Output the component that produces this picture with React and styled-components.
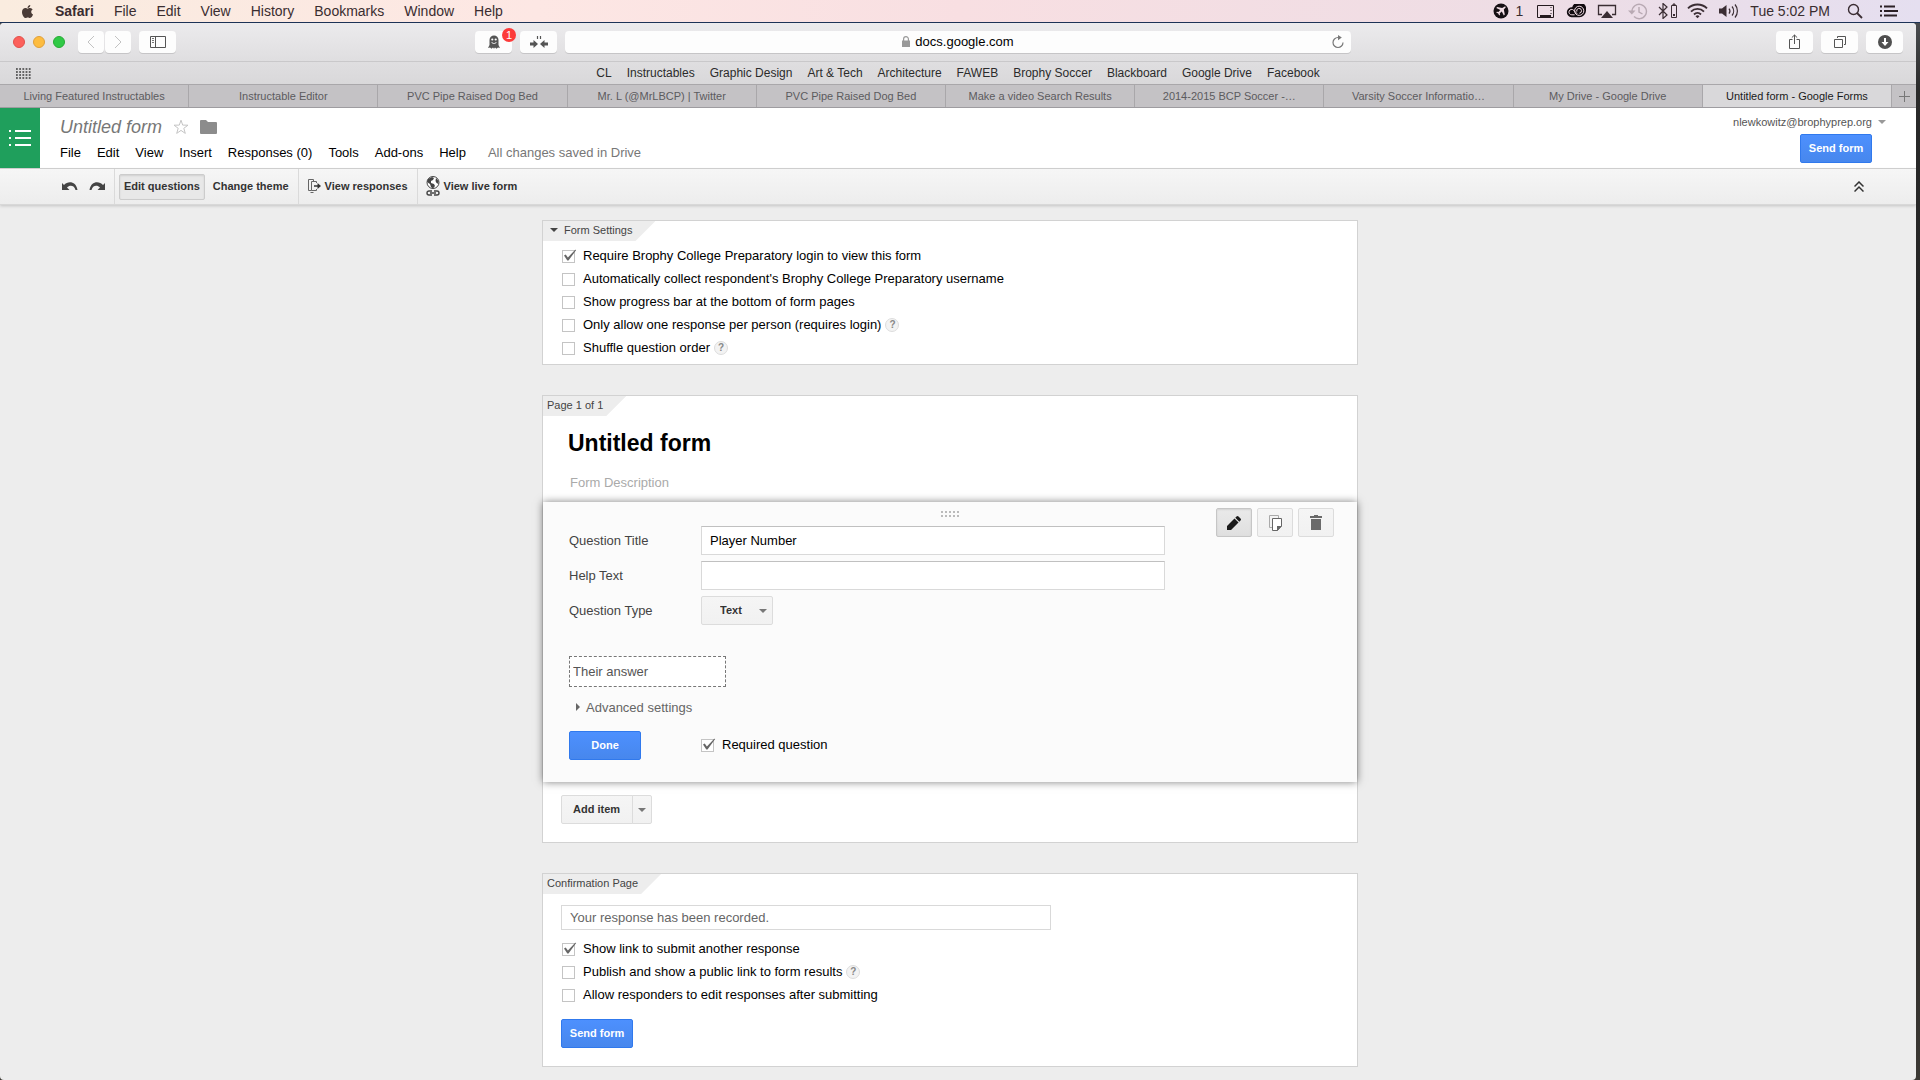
import React, { useState } from "react";
import styled, { createGlobalStyle, css } from "styled-components";
import { FaApple } from "react-icons/fa";

const GlobalStyle = createGlobalStyle`
  * {
    box-sizing: border-box;
  }

  body {
    margin: 0;
    background: #222;
    font-family: "Liberation Sans", Arial, Helvetica, sans-serif;
    font-size: 13px;
    color: #000;
  }

  button,
  input,
  select {
    font-family: inherit;
    margin: 0;
  }

  svg {
    display: block;
    flex: none;
  }
`;

const Desktop = styled.div`
  min-height: 100vh;
  display: flex;
  flex-direction: column;
  background: linear-gradient(#55585c, #2a2a2a 90px, #1c1c1c 60%, #3c3934);
`;

/* macOS menu bar */
const MenuBar = styled.header`
  height: 23px;
  padding: 0 22px 0 20px;
  display: flex;
  align-items: center;
  justify-content: space-between;
  border-bottom: 1px solid #1d3357;
  background: linear-gradient(
    90deg,
    #faecdf,
    #fde7e4 28%,
    #f8dfe2 50%,
    #eedde5 80%,
    #e5dff0
  );
  color: #3a2d30;
  font-size: 14px;
`;

const SystemMenus = styled.nav`
  display: flex;
  align-items: center;
  gap: 20px;
`;

const SystemMenu = styled.button`
  padding: 0;
  border: none;
  background: none;
  color: inherit;
  font-size: 14px;
  font-weight: ${(props) => (props.$bold ? "bold" : "normal")};
`;

const StatusItems = styled.div`
  display: flex;
  align-items: center;
  gap: 10px;
`;

const StatusGroup = styled.div`
  display: flex;
  align-items: center;
  gap: ${(props) => props.$gap}px;
`;

/* Safari window */
const BrowserWindow = styled.div`
  flex: 1;
  margin-right: 4px;
  display: flex;
  flex-direction: column;
  border-radius: 4px;
  overflow: hidden;
  background: #ededed;
`;

const BrowserToolbar = styled.div`
  height: 39px;
  display: grid;
  grid-template-columns: 475fr 876fr 565fr;
  align-items: center;
  padding-bottom: 1px;
  border-bottom: 1px solid #c9c8ca;
  background: linear-gradient(#ecebed, #dfdee0);
`;

const ToolbarSide = styled.div`
  display: flex;
  align-items: center;
  gap: 8px;
  padding-left: 13px;

  ${(props) =>
    props.$right &&
    css`
      justify-content: flex-end;
      padding: 0 13px 0 0;
    `}
`;

const ToolbarCenter = styled.div`
  display: flex;
  gap: 8px;
`;

const TrafficLights = styled.div`
  display: flex;
  gap: 8px;
  margin-right: 5px;
`;

const Light = styled.button`
  width: 12px;
  height: 12px;
  padding: 0;
  border: 1px solid ${(props) => props.$edge};
  border-radius: 50%;
  background: ${(props) => props.$color};
`;

const ButtonPair = styled.div`
  display: flex;
  gap: 1px;
`;

const ChromeButton = styled.button`
  position: relative;
  width: ${(props) => props.$width || 37}px;
  height: 22px;
  padding: 0;
  display: flex;
  align-items: center;
  justify-content: center;
  border: none;
  border-radius: 4px;
  background: #fdfdfd;
  box-shadow: 0 1px 0 #c6c5c7;
`;

const Badge = styled.span`
  position: absolute;
  top: -3px;
  right: -4px;
  width: 14px;
  height: 14px;
  border-radius: 50%;
  background: #fc3b3a;
  color: #fff;
  font-size: 11px;
  line-height: 14px;
  text-align: center;
`;

const RightButtons = styled.div`
  display: flex;
  gap: 8px;
`;

const AddressBar = styled.div`
  flex: 1;
  height: 22px;
  padding: 0 7px 0 19px;
  display: flex;
  align-items: center;
  border-radius: 4px;
  background: #fdfdfd;
  box-shadow: 0 1px 0 #c6c5c7;
`;

const Address = styled.div`
  flex: 1;
  display: flex;
  align-items: center;
  justify-content: center;
  gap: 5px;
`;

const IconButton = styled.button`
  padding: 0;
  border: none;
  background: none;
`;

const BookmarksBar = styled.nav`
  height: 22px;
  padding: 0 31px 0 16px;
  display: flex;
  align-items: center;
  background: linear-gradient(#dfdee0, #d9d8da);
`;

const Bookmarks = styled.div`
  flex: 1;
  display: flex;
  justify-content: center;
  gap: 15px;
`;

const Bookmark = styled.a`
  color: #2b2b2b;
  font-size: 12px;
  text-decoration: none;
`;

const TabStrip = styled.div`
  height: 24px;
  display: flex;
  border-top: 1px solid #a9a7aa;
  border-bottom: 1px solid #9e9ca0;
  background: #c4c2c5;
`;

const BrowserTab = styled.button`
  flex: 1;
  min-width: 0;
  padding: 0 16px;
  overflow: hidden;
  text-overflow: ellipsis;
  white-space: nowrap;
  border: none;
  border-right: 1px solid #a9a7aa;
  background: ${(props) => (props.$active ? "#d9d8da" : "transparent")};
  color: ${(props) => (props.$active ? "#1a1a1a" : "#5c5b5e")};
  font-size: 11px;
`;

const NewTab = styled.button`
  width: 24px;
  padding: 0;
  display: flex;
  align-items: center;
  justify-content: center;
  border: none;
  background: none;
`;

/* Forms header */
const FormsHeader = styled.header`
  height: 61px;
  display: flex;
  border-bottom: 1px solid #d4d4d4;
  background: #fff;
`;

const HomeLink = styled.a`
  width: 40px;
  height: 60px;
  display: flex;
  align-items: center;
  justify-content: center;
  background: #1f9f5c;
`;

const HeaderMain = styled.div`
  flex: 1;
  padding: 8px 0 0 20px;
  display: flex;
  flex-direction: column;
  gap: 7px;
`;

const TitleRow = styled.div`
  height: 22px;
  display: flex;
  align-items: center;
  gap: 11px;
`;

const DocTitle = styled.span`
  font-size: 18px;
  font-style: italic;
  color: #777;
`;

const MenuRow = styled.nav`
  height: 16px;
  display: flex;
  align-items: center;
  gap: 16px;
`;

const DocMenu = styled.button`
  padding: 0;
  border: none;
  background: none;
  font-size: 13px;
  line-height: 16px;
  color: #000;
`;

const SaveStatus = styled.span`
  margin-left: 6px;
  line-height: 16px;
  color: #777;
`;

const HeaderAside = styled.div`
  padding: 7px 30px 0 0;
  display: flex;
  flex-direction: column;
  align-items: flex-end;
  gap: 5px;
`;

const Account = styled.button`
  height: 14px;
  padding: 0;
  display: flex;
  align-items: center;
  gap: 6px;
  border: none;
  background: none;
  color: #555;
  font-size: 11px;
`;

const HeaderAction = styled.div`
  margin-right: 14px;
`;

const PrimaryButton = styled.button`
  width: 72px;
  height: 29px;
  padding: 0 0 2px;
  border: 1px solid #3079ed;
  border-radius: 2px;
  background: linear-gradient(#4d90fe, #4787ed);
  color: #fff;
  font-size: 11px;
  font-weight: bold;
`;

/* Forms toolbar */
const FormsToolbar = styled.div`
  height: 36px;
  padding: 0 52px 0 62px;
  display: flex;
  align-items: center;
  border-bottom: 1px solid #d8d8d8;
  background: linear-gradient(#f6f6f6, #ededed);
  box-shadow: 0 1px 3px rgba(0, 0, 0, 0.18);
`;

const ToolGroup = styled.div`
  height: 35px;
  padding: 0 4px;
  display: flex;
  align-items: center;
  gap: 3px;
  border-right: 1px solid #dadada;
`;

const HistoryGroup = styled(ToolGroup)`
  padding: 0 9px 0 0;
  gap: 11px;
`;

const LastGroup = styled(ToolGroup)`
  flex: 1;
  padding: 0 3px;
  border-right: none;
`;

const ToolButton = styled.button`
  height: 26px;
  padding: 0 4px 2px;
  display: flex;
  align-items: center;
  gap: 4px;
  border: 1px solid ${(props) => (props.$active ? "#ccc" : "transparent")};
  border-radius: 2px;
  background: ${(props) => (props.$active ? "#e8e8e8" : "transparent")};
  box-shadow: ${(props) =>
    props.$active ? "inset 0 1px 2px rgba(0, 0, 0, 0.1)" : "none"};
  color: #333;
  font-size: 11px;
  font-weight: bold;
`;

/* Page content */
const Page = styled.main`
  flex: 1;
  padding: 15px 16px 13px 0;
  display: flex;
  flex-direction: column;
  align-items: center;
  gap: 30px;
`;

const Panel = styled.section`
  width: 100%;
  max-width: 816px;
  border: 1px solid #d2d2d2;
  background: #fff;
  padding-bottom: ${(props) => props.$bottom}px;
`;

const Ribbon = styled.div`
  width: max-content;
  height: 20px;
  padding: 0 23px 2px 4px;
  display: flex;
  align-items: center;
  gap: 6px;
  clip-path: polygon(0 0, 100% 0, calc(100% - 20px) 100%, 0 100%);
  background: #ededed;
  color: #444;
  font-size: 11px;
`;

const RibbonToggle = styled(Ribbon).attrs({ as: "button" })`
  padding-left: 7px;
  border: none;
`;

const Options = styled.div`
  padding: 4px 0 0 19px;
`;

const OptionRow = styled.div`
  height: 23px;
  display: flex;
  align-items: center;
`;

const OptionLabel = styled.label`
  display: flex;
  align-items: center;
  gap: 8px;
`;

const OptionText = styled.span`
  padding-bottom: 2px;
`;

const CheckSlot = styled.span`
  width: 13px;
  height: 13px;
  display: grid;

  > * {
    grid-area: 1 / 1;
  }

  > input:not(:checked) + svg {
    display: none;
  }
`;

const CheckBox = styled.input`
  appearance: none;
  width: 13px;
  height: 13px;
  border: 1px solid #c4c4c4;
  background: #fff;
`;

const HelpMark = styled.button`
  width: 14px;
  height: 14px;
  margin: 0 0 2px 4px;
  padding: 0;
  border: 1px solid #ddd;
  border-radius: 50%;
  background: #f3f3f3;
  color: #888;
  font-size: 10px;
  font-weight: bold;
  line-height: 12px;
`;

const FormTitle = styled.h1`
  margin: 13px 0 0;
  padding-left: 25px;
  font-size: 23px;
  line-height: 28px;
`;

const FormDescription = styled.input`
  display: block;
  width: 100%;
  height: 16px;
  margin: 17px 0 12px;
  padding: 0 27px;
  border: none;
  outline: none;
  font-size: 13px;

  &::placeholder {
    color: #aaa;
    opacity: 1;
  }
`;

const QuestionCard = styled.div`
  position: relative;
  padding: 0 23px 22px 26px;
  display: grid;
  grid-template-columns: 1fr auto;
  grid-template-rows: 24px auto;
  background: #fbfbfb;
  box-shadow: 0 0 8px rgba(0, 0, 0, 0.5);
`;

const DragHandle = styled.div`
  grid-area: 1 / 1 / 2 / 3;
  display: flex;
  justify-content: center;
  padding: 9px 3px 0 0;
`;

const QuestionActions = styled.div`
  grid-area: 1 / 2 / 3 / 3;
  align-self: start;
  display: flex;
  gap: 5px;
  margin-top: 6px;
`;

const GrayButton = styled.button`
  height: 29px;
  padding: 0 12px 2px 11px;
  display: flex;
  align-items: center;
  justify-content: center;
  border: 1px solid #dcdcdc;
  border-radius: 2px;
  background: linear-gradient(#f5f5f5, #f1f1f1);
  color: #333;
  font-size: 11px;
  font-weight: bold;
`;

const ActionButton = styled(GrayButton)`
  width: 36px;
  padding: 0;

  ${(props) =>
    props.$active &&
    css`
      border-color: #c6c6c6;
      background: linear-gradient(#eaeaea, #dfdfdf);
      box-shadow: inset 0 1px 2px rgba(0, 0, 0, 0.1);
    `}
`;

const QuestionBody = styled.div`
  grid-area: 2 / 1;
`;

const Fields = styled.div`
  display: flex;
  flex-direction: column;
  gap: 6px;
`;

const Field = styled.div`
  display: flex;
  align-items: center;
`;

const FieldLabel = styled.label`
  width: 132px;
  color: #444;
`;

const TextInput = styled.input`
  width: 464px;
  height: 29px;
  padding: 0 8px;
  border: 1px solid #d9d9d9;
  border-top-color: #c0c0c0;
  background: #fff;
  font-size: 13px;
`;

const SelectWrap = styled.div`
  display: grid;
  align-items: center;

  > * {
    grid-area: 1 / 1;
  }

  > svg {
    justify-self: end;
    margin-right: 6px;
    pointer-events: none;
  }
`;

const TypeSelect = styled.select`
  appearance: none;
  width: 72px;
  height: 29px;
  padding: 0 18px 2px;
  border: 1px solid #dcdcdc;
  border-radius: 2px;
  background: linear-gradient(#f5f5f5, #f1f1f1);
  color: #333;
  font-size: 11px;
  font-weight: bold;
`;

const AnswerPreview = styled.input`
  display: block;
  width: 157px;
  height: 31px;
  margin-top: 31px;
  padding: 0 3px;
  border: 1px dashed #777;
  background: #fff;
  color: #555;
  font-size: 13px;
`;

const AdvancedToggle = styled.button`
  height: 16px;
  margin: 12px 0 16px;
  padding: 0 7px;
  display: flex;
  align-items: center;
  gap: 6px;
  border: none;
  background: none;
  color: #666;
  font-size: 13px;
`;

const QuestionFooter = styled.div`
  display: flex;
  align-items: center;
  gap: 60px;
`;

const AddItem = styled.div`
  display: flex;
  margin: 13px 0 0 18px;

  > :first-child {
    border-radius: 2px 0 0 2px;
  }

  > :last-child {
    margin-left: -1px;
    padding: 0 5px;
    border-radius: 0 2px 2px 0;
  }
`;

const ConfirmationBody = styled.div`
  padding: 11px 18px 0;
`;

const ConfirmationInput = styled(TextInput)`
  display: block;
  width: 490px;
  height: 25px;
  border-color: #d9d9d9;
  color: #666;
`;

const ConfirmationOptions = styled.div`
  padding: 8px 0 12px 1px;
`;

const Arrow = ({ color = "#777", side = false }) =>
  side ? (
    <svg width="4" height="8" viewBox="0 0 4 8">
      <path d="M0 0l4 4-4 4z" fill={color} />
    </svg>
  ) : (
    <svg width="8" height="4" viewBox="0 0 8 4">
      <path d="M0 0h8L4 4z" fill={color} />
    </svg>
  );

const Tick = () => (
  <svg width="15" height="13" viewBox="0 0 15 13" overflow="visible">
    <path
      d="M2 5.6l1.7-1.2 2.2 3L13.2-.2l1 .2L6.5 10.6H5.3z"
      fill="#666"
    />
  </svg>
);

const Option = ({ id, text, checked = false, help = false }) => {
  const [isChecked, setIsChecked] = useState(checked);

  return (
    <OptionRow>
      <OptionLabel htmlFor={id}>
        <CheckSlot>
          <CheckBox
            id={id}
            type="checkbox"
            checked={isChecked}
            onChange={() => setIsChecked(!isChecked)}
          />
          <Tick />
        </CheckSlot>
        <OptionText>{text}</OptionText>
      </OptionLabel>
      {help && <HelpMark>?</HelpMark>}
    </OptionRow>
  );
};

const systemMenus = [
  "File",
  "Edit",
  "View",
  "History",
  "Bookmarks",
  "Window",
  "Help",
];

const bookmarks = [
  "CL",
  "Instructables",
  "Graphic Design",
  "Art & Tech",
  "Architecture",
  "FAWEB",
  "Brophy Soccer",
  "Blackboard",
  "Google Drive",
  "Facebook",
];

const tabs = [
  "Living Featured Instructables",
  "Instructable Editor",
  "PVC Pipe Raised Dog Bed",
  "Mr. L (@MrLBCP) | Twitter",
  "PVC Pipe Raised Dog Bed",
  "Make a video Search Results",
  "2014-2015 BCP Soccer -…",
  "Varsity Soccer Informatio…",
  "My Drive - Google Drive",
  "Untitled form - Google Forms",
];

const docMenus = [
  "File",
  "Edit",
  "View",
  "Insert",
  "Responses (0)",
  "Tools",
  "Add-ons",
  "Help",
];

const StatusBar = () => (
  <StatusItems>
    <StatusGroup $gap={7}>
      <svg width="16" height="16" viewBox="0 0 16 16">
        <circle cx="8" cy="8" r="7.5" fill="#161014" />
        <path
          d="M11.8 3.4c.8 0 1 .5.8 1.2L10.8 6.5l1 5-1 .9-2-4-2 1.9.2 1.5-.8.7-1-2-2-1 .7-.8 1.5.2 1.9-2-4-2 .9-1 5 1z"
          fill="#f1dde4"
        />
      </svg>
      <span>1</span>
    </StatusGroup>
    <StatusGroup $gap={11}>
      <svg width="22" height="16" viewBox="0 0 22 16">
        <path d="M4.5 2.5h16v12h-16z" fill="none" stroke="#241a1e" />
        <path d="M7 12h11v3H7z" fill="#241a1e" />
        <path d="M18 4v7" stroke="#241a1e" strokeDasharray="1 2" />
      </svg>
      <svg width="20" height="14" viewBox="0 0 20 14">
        <path
          d="M6.2 3.2A7 6.8 0 0 1 20 6.8a6.6 6.6 0 0 1-6.6 6.4H5.5A5 5 0 0 1 6.2 3.2z"
          fill="#120c10"
        />
        <circle cx="13.2" cy="6.8" r="4.6" fill="none" stroke="#f1dde4" />
        <path
          d="M8.6 10.8H5.8a2.7 2.7 0 1 1 1.8-4.6l3.6 3.6"
          fill="none"
          stroke="#f1dde4"
        />
        <path
          d="M10.8 7.6a2.4 2.4 0 1 1 2.6 1.6"
          fill="none"
          stroke="#f1dde4"
        />
      </svg>
      <svg width="20" height="16" viewBox="0 0 20 16">
        <path
          d="M5 11.5H1.5v-9h17v9H15"
          fill="none"
          stroke="#3a2d33"
          strokeWidth="1.3"
        />
        <path d="M10 8l6 7H4z" fill="#3a2d33" />
      </svg>
      <svg width="20" height="17" viewBox="0 0 20 17" opacity="0.35">
        <path
          d="M4 8.5a7.2 7.2 0 1 1 2 5"
          fill="none"
          stroke="#5a4a52"
          strokeWidth="1.4"
        />
        <path d="M0 7.5h7.5L3.8 11.5z" fill="#5a4a52" />
        <path
          d="M11 4v5l3.5 2"
          fill="none"
          stroke="#5a4a52"
          strokeWidth="1.4"
        />
      </svg>
    </StatusGroup>
    <StatusGroup $gap={10}>
      <svg width="19" height="16" viewBox="0 0 19 16">
        <path
          d="M1 4l8 8-4 3.5V.5L9 4l-8 8"
          fill="none"
          stroke="#3a2d33"
          strokeWidth="1.2"
        />
        <path
          d="M13.5 2.5h5v12h-5zM15 1h2v1h-2z"
          fill="none"
          stroke="#3a2d33"
        />
        <path d="M15 11h2v2h-2z" fill="#3a2d33" />
      </svg>
      <svg width="21" height="16" viewBox="0 0 21 16">
        <g fill="none" stroke="#3a2d33" strokeWidth="1.9">
          <path d="M1 5.4a13.5 13.5 0 0 1 19 0" />
          <path d="M4 8.6a9.2 9.2 0 0 1 13 0" />
          <path d="M7 11.5a5 5 0 0 1 7 0" />
        </g>
        <path d="M8.5 13.2a3 3 0 0 1 4 0l-2 2z" fill="#3a2d33" />
      </svg>
      <svg width="22" height="16" viewBox="0 0 22 16">
        <path d="M1 5.5h3L8.5 2v12L4 10.5H1z" fill="#3a2d33" />
        <g fill="none" stroke="#3a2d33" strokeWidth="1.2">
          <path d="M11 5.5a4 4 0 0 1 0 5" />
          <path d="M14 3.5a7 7 0 0 1 0 9" />
          <path d="M17 1.5a10 10 0 0 1 0 13" />
        </g>
      </svg>
    </StatusGroup>
    <StatusGroup $gap={17}>
      <span>Tue 5:02 PM</span>
      <svg width="16" height="16" viewBox="0 0 16 16">
        <circle
          cx="6.5"
          cy="6.5"
          r="5"
          fill="none"
          stroke="#3a2d33"
          strokeWidth="1.4"
        />
        <path d="M10 10l5 5" stroke="#3a2d33" strokeWidth="1.8" />
      </svg>
      <svg width="18" height="12" viewBox="0 0 18 12">
        <path
          d="M0 1.5h2M4 1.5h11M0 6h2M4 6h14M0 10.5h2M4 10.5h13"
          stroke="#2b2026"
          strokeWidth="2"
        />
      </svg>
    </StatusGroup>
  </StatusItems>
);

const SafariChrome = () => (
  <>
    <BrowserToolbar>
      <ToolbarSide>
        <TrafficLights>
          <Light aria-label="Close" $color="#fc605b" $edge="#e2504b" />
          <Light aria-label="Minimize" $color="#fdbc40" $edge="#e0a03a" />
          <Light aria-label="Zoom" $color="#30c946" $edge="#27ab35" />
        </TrafficLights>
        <ButtonPair>
          <ChromeButton aria-label="Back" $width={26}>
            <svg width="8" height="14" viewBox="0 0 8 14">
              <path d="M7 1L1 7l6 6" fill="none" stroke="#c2c2c2" />
            </svg>
          </ChromeButton>
          <ChromeButton aria-label="Forward" $width={26}>
            <svg width="8" height="14" viewBox="0 0 8 14">
              <path d="M1 1l6 6-6 6" fill="none" stroke="#c2c2c2" />
            </svg>
          </ChromeButton>
        </ButtonPair>
        <ChromeButton aria-label="Sidebar">
          <svg width="16" height="12" viewBox="0 0 16 12">
            <path d="M.5.5h15v11H.5zM5.5.5v11" fill="none" stroke="#555" />
            <path d="M2 2.5h2M2 4.5h2M2 6.5h2" stroke="#777" />
          </svg>
        </ChromeButton>
      </ToolbarSide>
      <ToolbarCenter>
        <ChromeButton aria-label="Ghostery">
          <svg width="12" height="14" viewBox="0 0 12 14">
            <path
              d="M1.5 5a4.5 4.5 0 0 1 9 0v5l1.5 3-2-.5-1.5 1.3L7 12.5 6 13.8l-1-1.3-1.5 1.3L2 12.5 0 13l1.5-3z"
              fill="#555"
            />
            <circle cx="4.3" cy="4.5" r="1.1" fill="#fff" />
            <circle cx="7.7" cy="4.5" r="1.1" fill="#fff" />
            <path
              d="M3.5 7c1.2 2 3.8 2 5 0"
              fill="none"
              stroke="#fff"
              strokeWidth="0.9"
            />
          </svg>
          <Badge>1</Badge>
        </ChromeButton>
        <ChromeButton aria-label="Save">
          <svg width="18" height="12" viewBox="0 0 18 12">
            <path
              d="M0 6.5h3.500V4L8 8l-4.500 4V9.500H0zM18 6.500h-3.500V4L10 8l4.500 4V9.500H18z"
              fill="#555"
            />
            <path d="M7.5 0v3M10.5 0v3" stroke="#555" strokeWidth="1.2" />
          </svg>
        </ChromeButton>
        <AddressBar>
          <Address>
            <svg width="8" height="11" viewBox="0 0 8 11">
              <path d="M0 4.5h8V11H0z" fill="#999" />
              <path
                d="M1.6 5V3a2.4 2.4 0 0 1 4.8 0v2"
                fill="none"
                stroke="#999"
                strokeWidth="1.2"
              />
            </svg>
            <span>docs.google.com</span>
          </Address>
          <IconButton aria-label="Reload">
            <svg width="12" height="14" viewBox="0 0 12 14">
              <path
                d="M6.5 2.5H6A5 5 0 1 0 11 7.5"
                fill="none"
                stroke="#777"
                strokeWidth="1.2"
              />
              <path d="M6 0l3.8 2.6L6 5.3z" fill="#777" />
            </svg>
          </IconButton>
        </AddressBar>
      </ToolbarCenter>
      <ToolbarSide $right>
        <RightButtons>
          <ChromeButton aria-label="Share">
            <svg width="11" height="16" viewBox="0 0 11 16">
              <path
                d="M3.5 5.5h-3v9h10v-9h-3M5.5 10V1M2.8 3.6L5.5 1l2.7 2.6"
                fill="none"
                stroke="#555"
              />
            </svg>
          </ChromeButton>
          <ChromeButton aria-label="Show tabs">
            <svg width="12" height="12" viewBox="0 0 12 12">
              <path
                d="M.5 3.5h8v8h-8zM3.5 2V.5h8v8H10"
                fill="none"
                stroke="#555"
              />
            </svg>
          </ChromeButton>
          <ChromeButton aria-label="Downloads">
            <svg width="14" height="14" viewBox="0 0 14 14">
              <circle cx="7" cy="7" r="7" fill="#4f4f4f" />
              <path d="M6 3h2v4h2.5L7 11 3.5 7H6z" fill="#fff" />
            </svg>
          </ChromeButton>
        </RightButtons>
      </ToolbarSide>
    </BrowserToolbar>

    <BookmarksBar>
      <IconButton aria-label="Favorites">
        <svg width="15" height="11" viewBox="0 0 15 11">
          <path
            d="M0 1h15M0 4h15M0 7h15M0 10h15"
            stroke="#3c3c3c"
            strokeWidth="1.4"
            strokeDasharray="1.8 1.4"
          />
        </svg>
      </IconButton>
      <Bookmarks>
        {bookmarks.map((name) => (
          <Bookmark key={name} href="#">
            {name}
          </Bookmark>
        ))}
      </Bookmarks>
    </BookmarksBar>

    <TabStrip>
      {tabs.map((name, index) => (
        <BrowserTab key={index} $active={index === tabs.length - 1}>
          {name}
        </BrowserTab>
      ))}
      <NewTab aria-label="New tab">
        <svg width="11" height="11" viewBox="0 0 11 11">
          <path d="M5.5 0v11M0 5.5h11" stroke="#777" />
        </svg>
      </NewTab>
    </TabStrip>
  </>
);

const App = () => {
  const [title, setTitle] = useState("Player Number");
  const [helpText, setHelpText] = useState("");

  return (
    <Desktop>
      <GlobalStyle />

      <MenuBar>
        <SystemMenus>
          <FaApple size={15} color="#4a3b36" />
          <SystemMenu $bold>Safari</SystemMenu>
          {systemMenus.map((name) => (
            <SystemMenu key={name}>{name}</SystemMenu>
          ))}
        </SystemMenus>
        <StatusBar />
      </MenuBar>

      <BrowserWindow>
        <SafariChrome />

        <FormsHeader>
          <HomeLink href="#" aria-label="Forms home">
            <svg width="22" height="18" viewBox="0 0 22 18">
              <path
                d="M0 2h2M6 2h16M0 9h2M6 9h16M0 16h2M6 16h16"
                stroke="#fff"
                strokeWidth="2"
              />
            </svg>
          </HomeLink>
          <HeaderMain>
            <TitleRow>
              <DocTitle>Untitled form</DocTitle>
              <IconButton aria-label="Star">
                <svg width="16" height="16" viewBox="0 0 16 16">
                  <path
                    d="M8 1.2l1.7 4.9 5.3.1-4.2 3.1 1.5 5.1L8 11.4l-4.3 3 1.5-5.1L1 6.2l5.3-.1z"
                    fill="none"
                    stroke="#c4c4c4"
                  />
                </svg>
              </IconButton>
              <IconButton aria-label="Folder">
                <svg width="17" height="14" viewBox="0 0 17 14">
                  <path
                    d="M0 1q0-1 1-1h5l2 2h8q1 0 1 1v10q0 1-1 1H1q-1 0-1-1z"
                    fill="#8c8c8c"
                  />
                </svg>
              </IconButton>
            </TitleRow>
            <MenuRow>
              {docMenus.map((name) => (
                <DocMenu key={name}>{name}</DocMenu>
              ))}
              <SaveStatus>All changes saved in Drive</SaveStatus>
            </MenuRow>
          </HeaderMain>
          <HeaderAside>
            <Account>
              nlewkowitz@brophyprep.org
              <Arrow color="#999" />
            </Account>
            <HeaderAction>
              <PrimaryButton>Send form</PrimaryButton>
            </HeaderAction>
          </HeaderAside>
        </FormsHeader>

        <FormsToolbar>
          <HistoryGroup>
            <IconButton aria-label="Undo">
              <svg width="16" height="9" viewBox="0 0 16 9">
                <path
                  d="M0 1l2 2C6-1.3 14-1 15.5 8h-2C12.5 3.5 8 2.5 5 5.5L7.5 8H0z"
                  fill="#444"
                />
              </svg>
            </IconButton>
            <IconButton aria-label="Redo">
              <svg width="16" height="9" viewBox="0 0 16 9">
                <path
                  d="M16 1l-2 2C10-1.3 2-1 .5 8h2C3.5 3.5 8 2.5 11 5.5L8.5 8H16z"
                  fill="#444"
                />
              </svg>
            </IconButton>
          </HistoryGroup>
          <ToolGroup>
            <ToolButton $active>Edit questions</ToolButton>
            <ToolButton>Change theme</ToolButton>
          </ToolGroup>
          <ToolGroup>
            <ToolButton>
              <svg width="13" height="14" viewBox="0 0 13 14">
                <path
                  d="M8.5 4V2.5h-5v9h5V10M2.5 13.5h3M3.5 11.5H.5v-11h5v2"
                  fill="none"
                  stroke="#666"
                />
                <path d="M6 7h5" stroke="#333" strokeWidth="1.4" />
                <path d="M9.5 4L13 7l-3.5 3z" fill="#333" />
              </svg>
              View responses
            </ToolButton>
          </ToolGroup>
          <LastGroup>
            <ToolButton>
              <svg width="14" height="20" viewBox="0 0 14 20">
                <circle cx="7" cy="6.5" r="6" fill="#fff" stroke="#444" />
                <path
                  d="M2 3l4-2 2 1-1 2-2 1v2l3 1 1 2-2 2.5L5 11 4 8 1 6zM10 2l2.5 3v3l-2-1-1-2z"
                  fill="#444"
                />
                <path
                  d="M6 15H3a2 2 0 0 0 0 4h3M8 15h3a2 2 0 0 1 0 4H8M4 17h6"
                  fill="none"
                  stroke="#444"
                  strokeWidth="1.4"
                />
              </svg>
              View live form
            </ToolButton>
          </LastGroup>
          <IconButton aria-label="Hide menus">
            <svg width="10" height="11" viewBox="0 0 10 11">
              <path
                d="M.5 5.5L5 1l4.5 4.5M.5 10.5L5 6l4.5 4.5"
                fill="none"
                stroke="#333"
                strokeWidth="1.5"
              />
            </svg>
          </IconButton>
        </FormsToolbar>

        <Page>
          <Panel $bottom={4}>
            <RibbonToggle>
              <Arrow color="#444" />
              Form Settings
            </RibbonToggle>
            <Options>
              <Option
                id="login"
                text="Require Brophy College Preparatory login to view this form"
                checked
              />
              <Option
                id="collect"
                text="Automatically collect respondent's Brophy College Preparatory username"
              />
              <Option
                id="progress"
                text="Show progress bar at the bottom of form pages"
              />
              <Option
                id="once"
                text="Only allow one response per person (requires login)"
                help
              />
              <Option id="shuffle" text="Shuffle question order" help />
            </Options>
          </Panel>

          <Panel $bottom={18}>
            <Ribbon>Page 1 of 1</Ribbon>
            <FormTitle>Untitled form</FormTitle>
            <FormDescription
              aria-label="Form Description"
              placeholder="Form Description"
            />

            <QuestionCard>
              <DragHandle>
                <svg width="18" height="6" viewBox="0 0 18 6">
                  <path
                    d="M0 1h18M0 5h18"
                    stroke="#bbb"
                    strokeWidth="2"
                    strokeDasharray="2 2"
                  />
                </svg>
              </DragHandle>
              <QuestionBody>
                <Fields>
                  <Field>
                    <FieldLabel htmlFor="title">Question Title</FieldLabel>
                    <TextInput
                      id="title"
                      value={title}
                      onChange={(event) => setTitle(event.target.value)}
                    />
                  </Field>
                  <Field>
                    <FieldLabel htmlFor="help">Help Text</FieldLabel>
                    <TextInput
                      id="help"
                      value={helpText}
                      onChange={(event) => setHelpText(event.target.value)}
                    />
                  </Field>
                  <Field>
                    <FieldLabel htmlFor="type">Question Type</FieldLabel>
                    <SelectWrap>
                      <TypeSelect id="type">
                        <option>Text</option>
                      </TypeSelect>
                      <Arrow />
                    </SelectWrap>
                  </Field>
                </Fields>
                <AnswerPreview
                  aria-label="Answer preview"
                  value="Their answer"
                  readOnly
                />
                <AdvancedToggle>
                  <Arrow color="#666" side />
                  Advanced settings
                </AdvancedToggle>
                <QuestionFooter>
                  <PrimaryButton>Done</PrimaryButton>
                  <Option id="required" text="Required question" checked />
                </QuestionFooter>
              </QuestionBody>
              <QuestionActions>
                <ActionButton aria-label="Edit" $active>
                  <svg width="14" height="14" viewBox="0 0 14 14">
                    <path
                      d="M0 10l7.5-7.5 4 4L4 14H0zM8.3 1.7L9.5.5q1-1 2 0l2 2q1 1 0 2l-1.2 1.2z"
                      fill="#1a1a1a"
                    />
                  </svg>
                </ActionButton>
                <ActionButton aria-label="Duplicate">
                  <svg width="13" height="16" viewBox="0 0 13 16">
                    <path
                      d="M3 12.5H.5V.5h9V3"
                      fill="none"
                      stroke="#aaa"
                    />
                    <path
                      d="M3.5 3.5h9v7.5l-4 4.5h-5z"
                      fill="#fff"
                      stroke="#666"
                    />
                    <path d="M8 11h5l-5 5z" fill="#666" />
                  </svg>
                </ActionButton>
                <ActionButton aria-label="Delete">
                  <svg width="12" height="15" viewBox="0 0 12 15">
                    <path
                      d="M0 1h4V0h4v1h4v2H0zM1 4h10v11H1z"
                      fill="#6a6a6a"
                    />
                  </svg>
                </ActionButton>
              </QuestionActions>
            </QuestionCard>

            <AddItem>
              <GrayButton>Add item</GrayButton>
              <GrayButton aria-label="More item types">
                <Arrow />
              </GrayButton>
            </AddItem>
          </Panel>

          <Panel $bottom={18}>
            <Ribbon>Confirmation Page</Ribbon>
            <ConfirmationBody>
              <ConfirmationInput
                aria-label="Confirmation message"
                defaultValue="Your response has been recorded."
              />
              <ConfirmationOptions>
                <Option
                  id="another"
                  text="Show link to submit another response"
                  checked
                />
                <Option
                  id="publish"
                  text="Publish and show a public link to form results"
                  help
                />
                <Option
                  id="edit"
                  text="Allow responders to edit responses after submitting"
                />
              </ConfirmationOptions>
              <PrimaryButton>Send form</PrimaryButton>
            </ConfirmationBody>
          </Panel>
        </Page>
      </BrowserWindow>
    </Desktop>
  );
};

export default App;
